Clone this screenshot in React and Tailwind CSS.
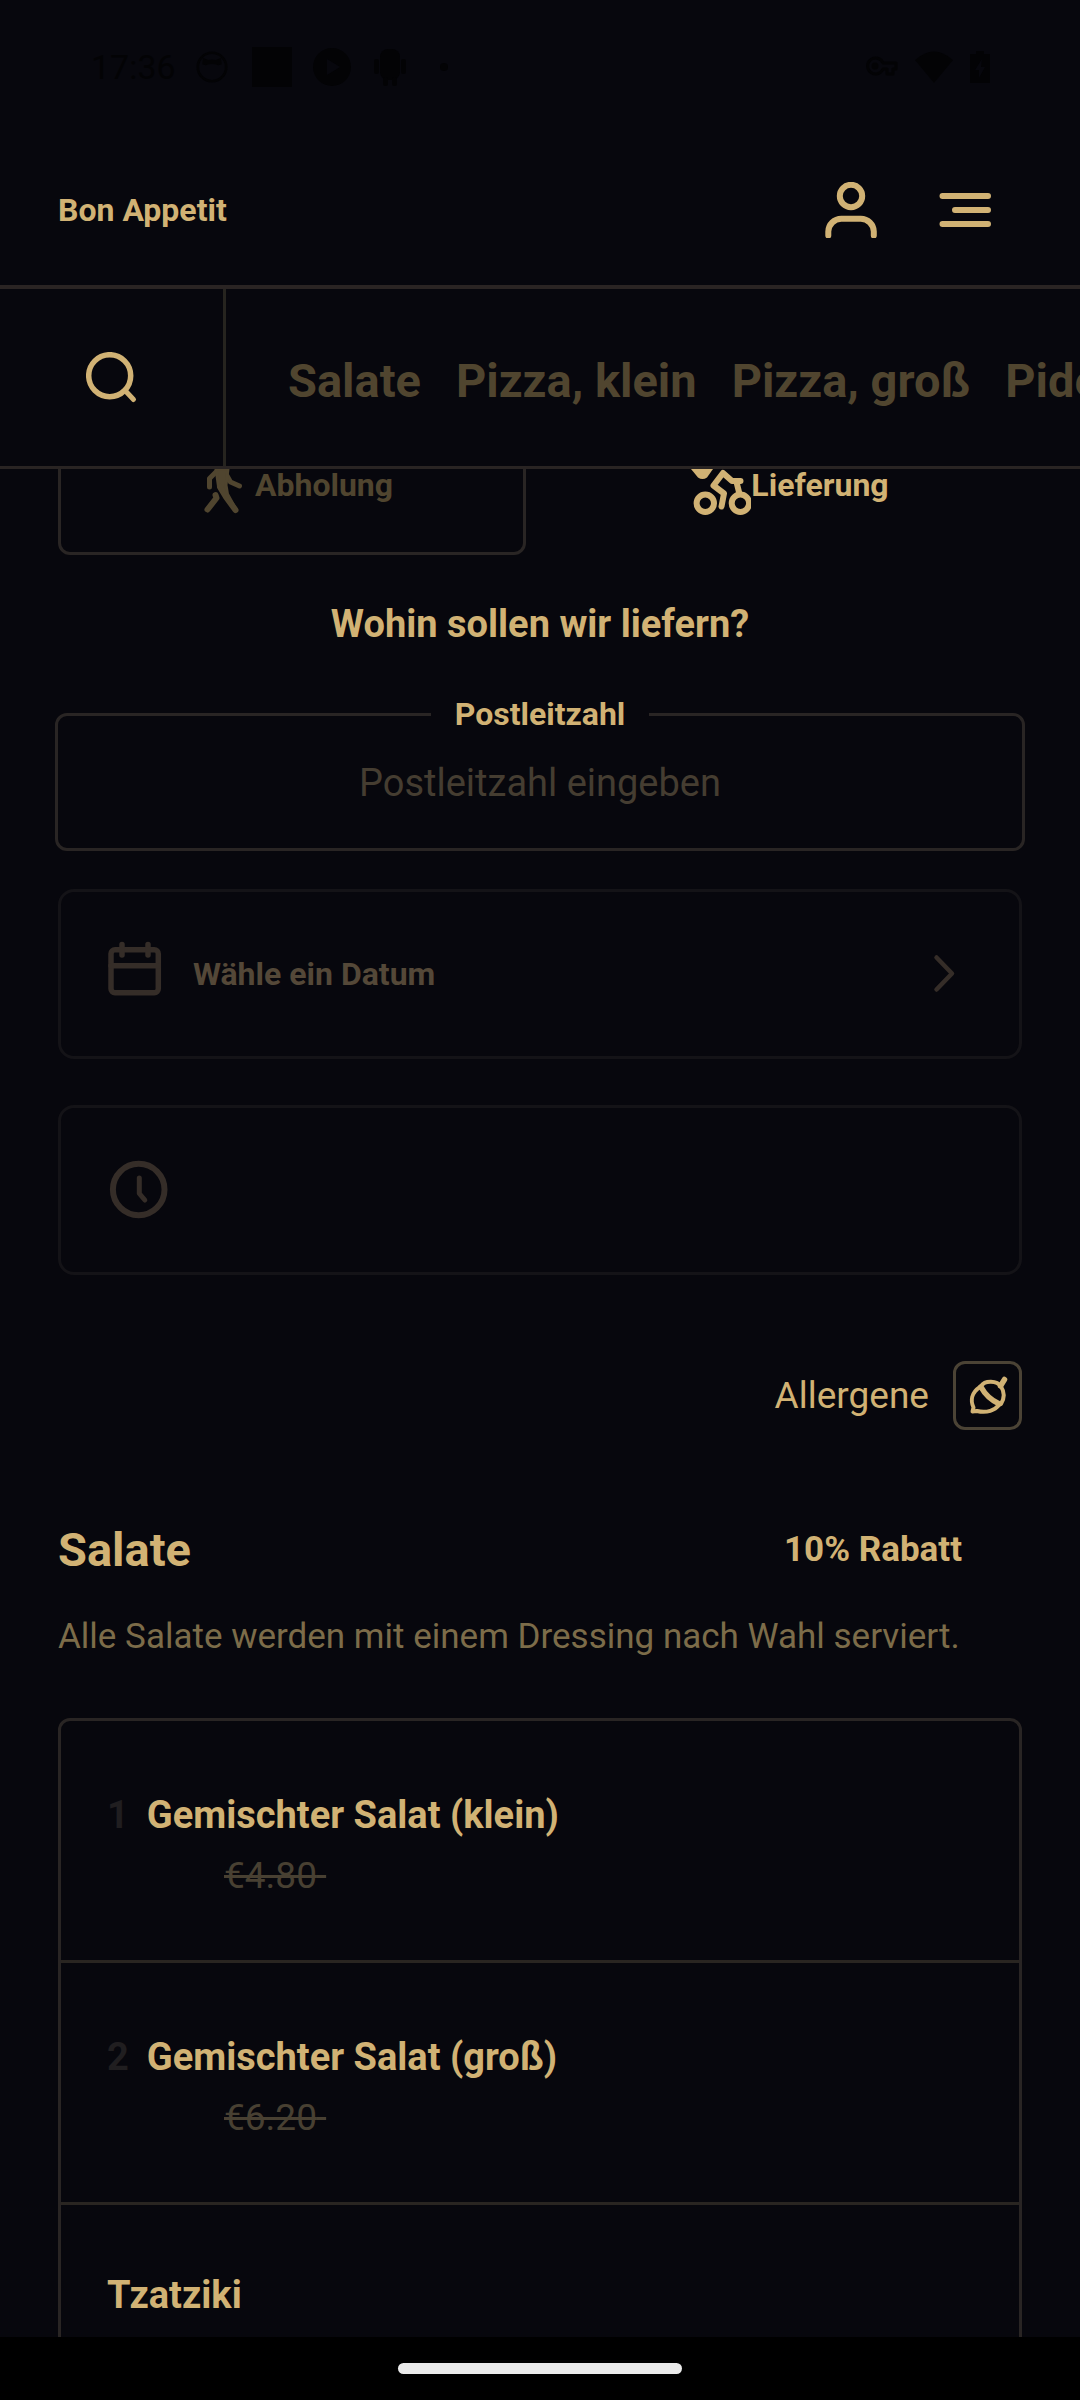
import React, { useState } from 'react';

const categories = ['Salate', 'Pizza, klein', 'Pizza, groß', 'Pide'];

const items = [
  { id: 1, number: '1', name: 'Gemischter Salat (klein)', price: '€4.80' },
  { id: 2, number: '2', name: 'Gemischter Salat (groß)', price: '€6.20' },
  { id: 3, name: 'Tzatziki' },
];

const stroke = {
  fill: 'none',
  stroke: 'currentColor',
  strokeWidth: 6,
  strokeLinecap: 'round',
  strokeLinejoin: 'round',
};

function StatusBar() {
  return (
    <div className="flex h-[134px] shrink-0 items-center justify-between pl-[91px] pr-[90px] text-[#030305]">
      <div className="flex items-center gap-5">
        <span className="text-[34px] leading-10">17:36</span>
        <svg className="mr-1 h-8 w-8" viewBox="0 0 36 36" fill="currentColor">
          <circle cx="18" cy="18" r="16" fill="none" stroke="currentColor" strokeWidth="3" />
          <path d="M8 8l6 2a18 18 0 0 1 8 0L28 8l1 7-4 1q-7-3-14 0l-4-1z" />
        </svg>
        <svg className="h-10 w-10" viewBox="0 0 40 40" fill="currentColor">
          <path d="M0 0h40v40H0z" />
        </svg>
        <svg className="h-10 w-10" viewBox="0 0 40 40" fill="currentColor">
          <path fillRule="evenodd" d="M20 1a19 19 0 1 0 0 38a19 19 0 1 0 0-38zM15 12l13 8-13 8z" />
        </svg>
        <svg className="h-10 w-9" viewBox="0 0 36 40" fill="currentColor">
          <rect x="8" y="2" width="20" height="31" rx="8" />
          <rect x="2" y="12" width="5" height="15" rx="2" />
          <rect x="29" y="12" width="5" height="15" rx="2" />
          <rect x="11" y="30" width="5" height="9" rx="2" />
          <rect x="20" y="30" width="5" height="9" rx="2" />
        </svg>
        <span className="ml-3 h-2 w-2 rounded-full bg-[#030305]"></span>
      </div>
      <div className="flex items-center gap-4">
        <svg className="h-6 w-8" viewBox="0 0 32 24" fill="none" stroke="currentColor" strokeWidth="3">
          <path d="M17 8h13v6h-3v5h-6v-5h-4a8 8 0 1 1 0-6z" strokeLinejoin="round" />
          <circle cx="9" cy="11" r="2" />
        </svg>
        <svg className="h-8 w-10" viewBox="0 0 40 32" fill="currentColor">
          <path d="M20 32L1 9Q20-8 39 9z" />
        </svg>
        <svg className="h-8 w-5" viewBox="0 0 20 32" fill="currentColor">
          <path fillRule="evenodd" d="M6 0h8v3h6v29H0V3h6zM12 8L5 19h4v8l6-11h-4z" />
        </svg>
      </div>
    </div>
  );
}

function WalkIcon() {
  return (
    <svg className="h-16 w-16 shrink-0" viewBox="191 453 64 64" {...stroke} strokeWidth="5">
      <circle cx="226" cy="460" r="4" fill="currentColor" />
      <path d="M216 472l-6.500 6.500V487M226 474l4.500 8 9 4" />
      <path d="M216 469h12l-2 16 1.500 9 8.500 15.500-8.500-11-9-12z" fill="currentColor" strokeWidth="3" />
      <path d="M220 487l6 10 9.500 13M215.500 495l1 3-9 11.500" strokeWidth="6" />
    </svg>
  );
}

function BikeIcon() {
  return (
    <svg className="h-16 w-16 shrink-0" viewBox="687 453 64 64" {...stroke}>
      <circle cx="705.300" cy="503.300" r="8.700" />
      <circle cx="740.400" cy="503.300" r="8.700" />
      <circle cx="729" cy="460" r="3" fill="currentColor" />
      <path d="M691 469l7 8.500q4.500 3 9 0l6-8.500v-8h-22z" fill="currentColor" stroke="none" />
      <path d="M721.500 506.500l2.500-13-10.500-8 9.500-12.500 9 8h8.500M736.500 482l3 12" />
    </svg>
  );
}

export default function App() {
  const [mode, setMode] = useState('delivery');
  const [zip, setZip] = useState('');

  const tabClass = (active) =>
    `flex h-[140px] items-center justify-center rounded-xl border-[3px] text-[32px] font-bold leading-10 ${
      active ? 'border-transparent text-[#d1b274]' : 'border-[#292524] text-[#50452f]'
    }`;

  return (
    <div className="flex h-screen flex-col overflow-hidden bg-[#07070d] font-['Roboto',sans-serif] text-[#d1b274]">
      <StatusBar />

      {/* Header */}
      <header className="flex h-[155px] shrink-0 items-center justify-between border-b-4 border-[#2a2423] pl-[58px] pr-[87px]">
        <a href="#" className="text-[32px] font-bold leading-10">Bon Appetit</a>
        <div className="flex items-center gap-[58px]">
          <button aria-label="Konto">
            <svg className="h-14 w-14" viewBox="823 181 56 56" {...stroke}>
              <circle cx="851" cy="195" r="11.200" />
              <path d="M828.300 234.500v-4a13 13 0 0 1 13-12.700h19.500a13 13 0 0 1 13 12.700v4" />
            </svg>
          </button>
          <button aria-label="Menü">
            <svg className="h-14 w-14" viewBox="937 181 56 56" {...stroke}>
              <path d="M942.500 195h45.500M955 209h33M942.500 223h45.500" />
            </svg>
          </button>
        </div>
      </header>

      {/* Category bar */}
      <nav className="flex h-[180px] shrink-0 border-b-[3px] border-[#292423]">
        <button aria-label="Suche" className="flex w-[226px] shrink-0 items-center justify-center border-r-[3px] border-[#26241f]">
          <svg className="h-[52px] w-[52px]" viewBox="86 351 52 52" {...stroke}>
            <circle cx="109.700" cy="374.700" r="21" strokeWidth="5.500" />
            <path d="M126.500 391l7 7.500" strokeWidth="5" />
          </svg>
        </button>
        <div className="flex flex-1 items-center gap-[35px] overflow-hidden whitespace-nowrap pl-[62px] pt-[6px]">
          {categories.map((cat) => (
            <a key={cat} href="#" className="text-[47px] font-bold leading-14 text-[#50452f]">{cat}</a>
          ))}
        </div>
      </nav>

      <main className="min-h-0 flex-1 overflow-hidden px-[58px]">
        {/* Pickup / delivery, partly scrolled under the category bar */}
        <div className="-mt-[54px] grid grid-cols-2 gap-7">
          <button onClick={() => setMode('pickup')} className={tabClass(mode === 'pickup')}>
            <WalkIcon />
            Abholung
          </button>
          <button onClick={() => setMode('delivery')} className={tabClass(mode === 'delivery')}>
            <BikeIcon />
            Lieferung
          </button>
        </div>

        <h2 className="mt-[45px] text-center text-[38px] font-bold leading-12">Wohin sollen wir liefern?</h2>

        <fieldset className="-mx-[3px] mt-12 rounded-xl border-[3px] border-[#292524] pb-[14px]">
          <legend className="mx-auto px-6 text-[32px] font-bold leading-9">
            <label htmlFor="zip">Postleitzahl</label>
          </legend>
          <input
            id="zip"
            type="text"
            value={zip}
            onChange={(e) => setZip(e.target.value)}
            placeholder="Postleitzahl eingeben"
            className="h-[102px] w-full bg-transparent text-center text-[38px] outline-none placeholder:text-[#453d31]"
          />
        </fieldset>

        <button className="mt-[38px] flex h-[170px] w-full items-center rounded-2xl border-[3px] border-[#141317] px-[46px] text-[32px] font-bold leading-10 text-[#544838]">
          <svg className="mr-[30px] h-[72px] w-14 text-[#352d28]" viewBox="107 938 56 72" {...stroke} strokeWidth="5.500">
            <rect x="111" y="949.700" width="47.300" height="43" rx="4" />
            <path d="M111 965.700h47M122 944.500v10.500M148 944.500v10.500" />
          </svg>
          Wähle ein Datum
          <svg className="ml-auto h-10 w-10 text-[#352d28]" viewBox="933 954 40 40" {...stroke} strokeWidth="4.500">
            <path d="M936.500 957.500l15.500 16-15.500 16" />
          </svg>
        </button>

        <button aria-label="Uhrzeit" className="mt-[46px] flex h-[170px] w-full items-center rounded-2xl border-[3px] border-[#141317] px-[46px] text-[#352d28]">
          <svg className="h-16 w-16" viewBox="107 1158 64 64" {...stroke}>
            <circle cx="138.700" cy="1189.500" r="25.800" />
            <path d="M139.300 1178v15.500l5.500 6.500" strokeWidth="5" />
          </svg>
        </button>

        {/* Allergens */}
        <div className="mt-[86px] flex items-center justify-end gap-6">
          <label htmlFor="allergens" className="text-[37px] leading-12">Allergene</label>
          <button id="allergens" className="flex h-[69px] w-[69px] items-center justify-center rounded-xl border-[3px] border-[#4b4335]">
            <svg className="h-[41px] w-[41px]" viewBox="968 1375 41 41" {...stroke} strokeWidth="4">
              <path d="M982 1386C986 1380 998 1380.500 1002 1386.500Q1007.500 1395 1002 1404L1000 1404.500" />
              <path d="M981 1387C972 1393 971.500 1401 974.500 1407.500L973.500 1411.500L978 1411C988 1413.500 996 1410 1000 1405" />
              <path d="M982 1387Q988 1398 999.500 1403.500" strokeWidth="5.500" />
              <path d="M1001.500 1386l4-6.500" strokeWidth="5.500" />
            </svg>
          </button>
        </div>

        {/* Menu section */}
        <section className="mt-[92px]">
          <div className="flex items-center justify-between pr-[60px]">
            <h2 className="text-[47px] font-bold leading-14">Salate</h2>
            <span className="text-[35px] font-bold leading-12">10% Rabatt</span>
          </div>
          <p className="mt-[35px] text-[35px] leading-12 text-[#7c6c49]">
            Alle Salate werden mit einem Dressing nach Wahl serviert.
          </p>

          <ul className="mt-[57px] divide-y-[3px] divide-[#292521] rounded-t-xl border-[3px] border-[#292524]">
            {items.map((item) => (
              <li key={item.id} className={`px-[46px] pb-[60px] text-[38px] leading-12 ${item.number ? 'pt-[70px]' : 'pt-[66px]'}`}>
                <div className="flex gap-[18px] font-bold">
                  {item.number && <span className="text-[#201e20]">{item.number}</span>}
                  <h3>{item.name}</h3>
                </div>
                {item.price && (
                  <p className="mt-[13px] pl-[117px] text-[37px] text-[#484032]">
                    <s>{item.price}&nbsp;</s>
                  </p>
                )}
              </li>
            ))}
          </ul>
        </section>
      </main>

      {/* Gesture bar */}
      <footer className="flex h-[63px] shrink-0 justify-center bg-black pt-[26px]">
        <div className="h-[11px] w-[284px] rounded-full bg-[#ebebeb]"></div>
      </footer>
    </div>
  );
}
